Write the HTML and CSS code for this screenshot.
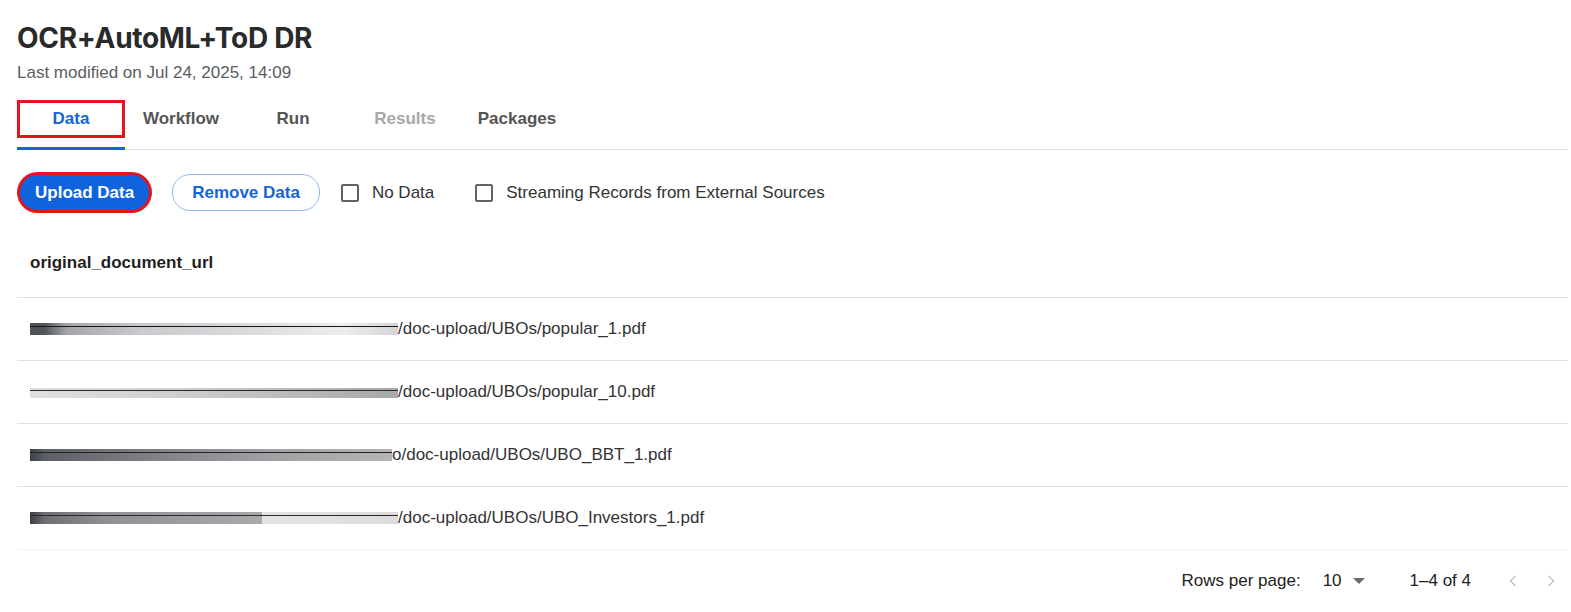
FILE: index.html
```html
<!DOCTYPE html>
<html lang="en">
<head>
    <meta charset="UTF-8">
    <meta name="viewport" content="width=device-width, initial-scale=1.0">
    <title>OCR+AutoML+ToD DR - Data</title>
    <link rel="stylesheet" href="styles.css">
</head>
<body>
    <div class="project-page">
        <header class="project-header">
            <h1>OCR+AutoML+ToD DR</h1>
            <div class="project-meta">Last modified on Jul 24, 2025, 14:09</div>
        </header>

        <nav class="tabs">
            <div class="tab active"><span class="tab-label">Data</span></div>
            <div class="tab"><span class="tab-label">Workflow</span></div>
            <div class="tab"><span class="tab-label">Run</span></div>
            <div class="tab disabled"><span class="tab-label">Results</span></div>
            <div class="tab"><span class="tab-label">Packages</span></div>
        </nav>

        <div class="toolbar">
            <button class="btn btn-primary highlighted">Upload Data</button>
            <button class="btn btn-outline">Remove Data</button>
            <label class="check"><span class="check-box"></span>No Data</label>
            <label class="check"><span class="check-box"></span>Streaming Records from External Sources</label>
        </div>

        <table class="data-table">
            <thead>
                <tr><th>original_document_url</th></tr>
            </thead>
            <tbody>
                <tr><td><span class="redacted r1"></span>/doc-upload/UBOs/popular_1.pdf</td></tr>
                <tr><td><span class="redacted r2"></span>/doc-upload/UBOs/popular_10.pdf</td></tr>
                <tr><td><span class="redacted r3"></span>o/doc-upload/UBOs/UBO_BBT_1.pdf</td></tr>
                <tr><td><span class="redacted r4"></span>/doc-upload/UBOs/UBO_Investors_1.pdf</td></tr>
            </tbody>
        </table>

        <div class="pagination">
            <span class="rows-label">Rows per page:</span>
            <span class="rows-select">10
                <svg width="12" height="6" viewBox="0 0 12 6"><path d="M0 0h12L6 6z" fill="#6b6b6b"/></svg>
            </span>
            <span class="page-range">1–4 of 4</span>
            <span class="page-nav">
                <svg width="8" height="12" viewBox="0 0 8 12"><path d="M6.5 1L1.5 6l5 5" fill="none" stroke="#c4c4c4" stroke-width="1.4"/></svg>
                <svg width="8" height="12" viewBox="0 0 8 12"><path d="M1.5 1l5 5-5 5" fill="none" stroke="#c4c4c4" stroke-width="1.4"/></svg>
            </span>
        </div>
    </div>
</body>
</html>
```

FILE: styles.css
```css
* {
    margin: 0;
    padding: 0;
    box-sizing: border-box;
}

body {
    font-family: 'Liberation Sans', Arial, sans-serif;
    background: #ffffff;
    color: #2b2b2b;
    font-size: 17px;
}

.project-page {
    padding: 20px 3px 0 17px;
}

.project-header h1 {
    font-family: 'Inter', 'Liberation Sans', sans-serif;
    font-size: 28px;
    font-weight: 700;
    line-height: 36px;
    color: #2a2a2a;
    letter-spacing: -0.3px;
}

.project-meta {
    margin-top: 7px;
    color: #5a5d61;
    line-height: 20px;
}

/* tabs */
.tabs {
    display: flex;
    margin-top: 11px;
    border-bottom: 1px solid #e0e0e0;
}

.tab {
    width: 112px;
    padding: 6px 0 9px;
    border-bottom: 3px solid transparent;
    margin-bottom: -1px;
    display: flex;
    justify-content: center;
    font-weight: 700;
    color: #555555;
}

.tab-label {
    display: flex;
    align-items: center;
    justify-content: center;
    height: 38px;
    width: 100%;
}

.tab.active {
    width: 108px;
    color: #1565d8;
    border-bottom-color: #1565d8;
}

.tab.active .tab-label {
    border: 3px solid #e3141c;
}

.tab.disabled {
    color: #a8a8a8;
}

/* toolbar */
.toolbar {
    display: flex;
    align-items: center;
    margin-top: 24px;
    padding-left: 3px;
}

.btn {
    height: 35px;
    border-radius: 18px;
    font-family: inherit;
    font-size: 17px;
    font-weight: 700;
    cursor: pointer;
}

.btn-primary {
    padding: 0 15px;
    background: #0f63dc;
    color: #ffffff;
    border: none;
}

.btn-primary.highlighted {
    box-shadow: 0 0 0 3px #e3141c;
}

.btn-outline {
    margin-left: 23px;
    background: #ffffff;
    color: #1565d8;
    border: 1px solid #93b8f0;
    padding: 0 19px;
    height: 37px;
}

.check {
    display: flex;
    align-items: center;
    margin-left: 21px;
    color: #333333;
}

.check + .check {
    margin-left: 41px;
}

.check-box {
    width: 18px;
    height: 18px;
    border: 2px solid #5f6368;
    border-radius: 2px;
    margin-right: 13px;
}

/* table */
.data-table {
    width: 100%;
    margin-top: 19px;
    border-collapse: collapse;
}

.data-table th {
    height: 67px;
    padding: 0 13px;
    text-align: left;
    font-weight: 700;
    color: #1f1f1f;
    border-bottom: 1px solid #e0e0e0;
}

.data-table td {
    height: 63px;
    padding: 0 13px;
    color: #333333;
    border-bottom: 1px solid #e0e0e0;
    white-space: nowrap;
}

.data-table tbody tr:last-child td {
    border-bottom-color: #f4f4f4;
}

.redacted {
    display: inline-block;
    width: 368px;
    height: 12px;
    vertical-align: -1px;
}

.redacted.r1 {
    background:
        linear-gradient(#000 0 0) 0 3px / 100% 1px no-repeat,
        linear-gradient(90deg, #3c4046 0%, #3f434a 4%, #9a9ca0 10%, #c4c5c8 30%, #d7d8da 60%, #ececec 85%, #d0d0d0 100%);
    opacity: 0.9;
}

.redacted.r2 {
    height: 10px;
    background:
        linear-gradient(#2a2a2a 0 0) 0 2px / 100% 1px no-repeat,
        linear-gradient(90deg, #e0e0e0 0%, #cfcfcf 40%, #b4b4b4 80%, #a8a8a8 100%);
}

.redacted.r3 {
    width: 362px;
    background:
        linear-gradient(#222 0 0) 0 3px / 100% 1px no-repeat,
        linear-gradient(90deg, #3c3f45 0%, #5c5f64 4%, #7b7d81 30%, #9fa0a3 65%, #b5b5b7 100%);
}

.redacted.r4 {
    background:
        linear-gradient(#2a2a2a 0 0) 0 3px / 100% 1px no-repeat,
        linear-gradient(90deg, #3c3f45 0%, #6d6f73 4%, #8e9094 20%, #a9aaac 63%, #e4e4e5 63%, #dcdcdd 100%);
}

/* pagination */
.pagination {
    display: flex;
    align-items: center;
    justify-content: flex-end;
    height: 62px;
    padding-right: 13px;
    color: #222222;
}

.rows-select {
    display: flex;
    align-items: center;
    gap: 11px;
    margin-left: 22px;
}

.page-range {
    margin-left: 45px;
}

.page-nav {
    display: flex;
    gap: 30px;
    margin-left: 38px;
}
```
